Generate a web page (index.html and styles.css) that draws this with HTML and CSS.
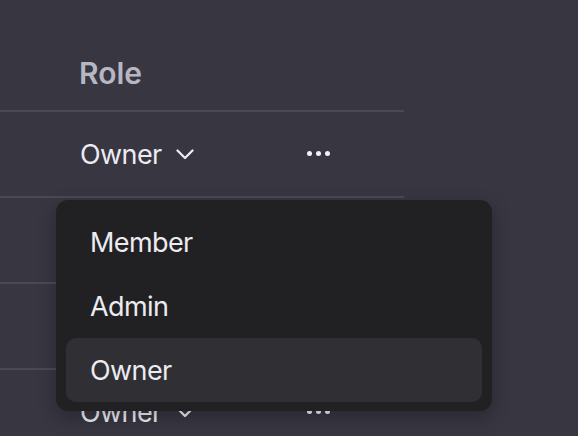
FILE: index.html
```html
<!DOCTYPE html>
<html>
<head>
<meta charset="utf-8">
<link rel="stylesheet" href="styles.css">
</head>
<body>
<div class="page">
  <div class="table">
    <div class="head"><span class="head-role">Role</span></div>
    <div class="row">
      <div class="role">Owner <svg class="chev" width="18" height="11" viewBox="0 0 18 11"><path d="M1.5 1.5 L9 9 L16.5 1.5" fill="none" stroke="#ecebf1" stroke-width="2.3" stroke-linecap="round" stroke-linejoin="round"/></svg></div>
      <div class="dots"><i></i><i></i><i></i></div>
    </div>
    <div class="row"></div>
    <div class="row"></div>
    <div class="row">
      <div class="role">Owner <svg class="chev" width="18" height="11" viewBox="0 0 18 11"><path d="M1.5 1.5 L9 9 L16.5 1.5" fill="none" stroke="#ecebf1" stroke-width="2.3" stroke-linecap="round" stroke-linejoin="round"/></svg></div>
      <div class="dots"><i></i><i></i><i></i></div>
    </div>
  </div>
  <div class="menu">
    <div class="item">Member</div>
    <div class="item">Admin</div>
    <div class="item active">Owner</div>
  </div>
</div>
</body>
</html>
```
FILE: styles.css
```css
html, body {
  margin: 0;
  padding: 0;
  background: #373641;
  overflow: hidden;
}
.page {
  position: relative;
  width: 578px;
  height: 436px;
  overflow: hidden;
  font-family: Inter, "Liberation Sans", sans-serif;
  color: #ecebf1;
}
.table {
  width: 404px;
}
.head {
  height: 110px;
  border-bottom: 2px solid #4b4a54;
  box-sizing: content-box;
  padding-left: 79px;
  display: flex;
  align-items: flex-start;
}
.head-role {
  margin-top: 53px;
  font-size: 30px;
  font-weight: 600;
  color: #b7b6c3;
  line-height: 40px;
}
.row {
  border-bottom: 2px solid #4b4a54;
  display: flex;
  align-items: center;
  padding-left: 80px;
  padding-top: 2px;
  box-sizing: border-box;
  height: 86px;
}
.role {
  width: 227px;
  font-size: 27px;
  letter-spacing: -0.6px;
  display: flex;
  align-items: center;
  gap: 14px;
  line-height: 32px;
}
.chev {
  display: block;
  margin-top: -1px;
}
.dots {
  display: flex;
  gap: 4px;
  margin-top: -4px;
}
.dots i {
  display: block;
  width: 5px;
  height: 5px;
  border-radius: 50%;
  background: #f2f1f6;
}
.menu {
  position: absolute;
  left: 56px;
  top: 200px;
  width: 436px;
  height: 211px;
  box-sizing: border-box;
  padding: 10px 10px 9px;
  background: #212124;
  border-radius: 12px;
  box-shadow: 0 6px 18px rgba(0, 0, 0, 0.25);
}
.item {
  height: 64px;
  display: flex;
  align-items: center;
  padding-left: 24px;
  font-size: 27px;
  letter-spacing: -0.6px;
  color: #ecebf1;
  border-radius: 10px;
}
.item.active {
  background: #2f2f34;
}
```
